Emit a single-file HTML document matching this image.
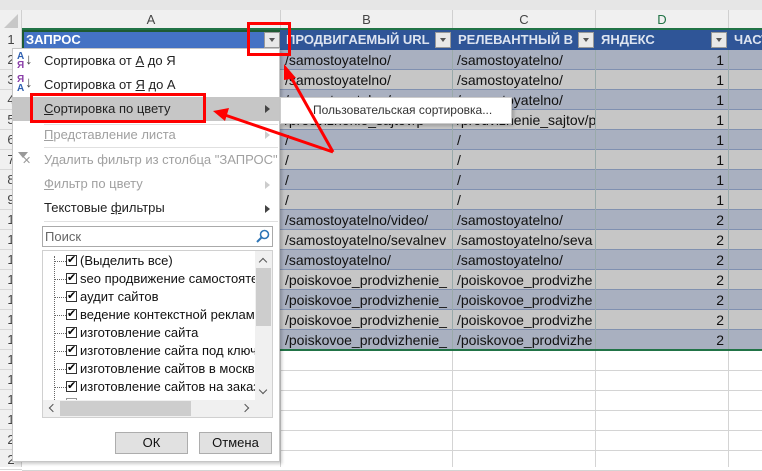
<!DOCTYPE html>
<html><head><meta charset="utf-8"><style>
*{margin:0;padding:0;box-sizing:border-box}
body{width:762px;height:467px;overflow:hidden;background:#fff;font-family:"Liberation Sans","DejaVu Sans",sans-serif;position:relative}
.a{position:absolute}
.cell{position:absolute;height:20px;font-size:14px;line-height:20px;color:#111;white-space:nowrap;overflow:hidden;padding-left:4px}
.mi{position:absolute;left:44px;font-size:13px;color:#222;line-height:20px;white-space:nowrap}
.dis{color:#a0a0a0}
.arr{position:absolute;left:265px;width:0;height:0;border-left:5px solid #444;border-top:4px solid transparent;border-bottom:4px solid transparent}
.li{position:absolute;font-size:13px;color:#111;line-height:18px;white-space:nowrap}
.cb{position:absolute;left:24px;width:11px;height:11px;border:1px solid #333;background:#fff;font-size:11px;line-height:9px;text-align:center;font-weight:bold}
.dot{position:absolute;left:12px;width:12px;border-top:1px dotted #666}
.hd{position:absolute;top:30px;font-size:13px;font-weight:bold;color:#dde4f0;line-height:20px;white-space:nowrap;overflow:hidden}
.chev{position:absolute;width:6px;height:6px;border-left:1.5px solid #555;border-top:1.5px solid #555}
</style></head><body>
<div class="a" style="left:0;top:0;width:762px;height:10px;background:#e6e6e6"></div>
<div class="a" style="left:0;top:10px;width:762px;height:20px;background:#f0f0f0;border-bottom:1px solid #d0d0d0"></div>
<div class="a" style="left:0;top:10px;width:22px;height:457px;background:#f0f0f0;border-right:1px solid #d0d0d0"></div>
<div class="a" style="left:4px;top:14px;width:0;height:0;border-left:14px solid transparent;border-bottom:14px solid #c8c8c8"></div>
<div class="a" style="left:22px;top:10px;width:258px;height:20px;font-size:13px;line-height:20px;text-align:center;color:#444">A</div>
<div class="a" style="left:280px;top:10px;width:172px;height:20px;font-size:13px;line-height:20px;text-align:center;color:#444;border-left:1px solid #d0d0d0">B</div>
<div class="a" style="left:452px;top:10px;width:143px;height:20px;font-size:13px;line-height:20px;text-align:center;color:#444;border-left:1px solid #d0d0d0">C</div>
<div class="a" style="left:595px;top:10px;width:133px;height:20px;font-size:13px;line-height:20px;text-align:center;color:#217346;border-left:1px solid #d0d0d0">D</div>
<div class="a" style="left:728px;top:10px;width:34px;height:20px;border-left:1px solid #d0d0d0"></div>
<div class="a" style="left:22px;top:28px;width:740px;height:2px;background:#217346"></div>

<div class="a" style="left:0;top:30px;width:22px;font-size:13px;color:#444;line-height:20px;text-align:center">1</div>
<div id="rn"></div>

<div class="a" style="left:22px;top:30px;width:258px;height:20px;background:#4472c4;border:2px solid #1e5a32"></div>
<div class="a" style="left:26px;top:30px;font-size:13px;font-weight:bold;color:#fff;line-height:20px">ЗАПРОС</div>
<div class="a" style="left:280px;top:30px;width:482px;height:20px;background:#2f5597"></div>
<div class="hd" style="left:286px;width:146px">ПРОДВИГАЕМЫЙ URL</div>
<div class="hd" style="left:458px;width:118px">РЕЛЕВАНТНЫЙ В Я</div>
<div class="hd" style="left:601px">ЯНДЕКС</div>
<div class="hd" style="left:734px">ЧАСТ</div>
<div class="a" style="left:264px;top:32px;width:16px;height:16px;background:#e8e8e8;border:1px solid #999"></div>
<div class="a" style="left:269px;top:38px;border-top:4px solid #555;border-left:3px solid transparent;border-right:3px solid transparent"></div>
<div class="a" style="left:435px;top:32px;width:16px;height:16px;background:#e8e8e8;border:1px solid #999"></div>
<div class="a" style="left:440px;top:38px;border-top:4px solid #555;border-left:3px solid transparent;border-right:3px solid transparent"></div>
<div class="a" style="left:578px;top:32px;width:16px;height:16px;background:#e8e8e8;border:1px solid #999"></div>
<div class="a" style="left:583px;top:38px;border-top:4px solid #555;border-left:3px solid transparent;border-right:3px solid transparent"></div>
<div class="a" style="left:711px;top:32px;width:16px;height:16px;background:#e8e8e8;border:1px solid #999"></div>
<div class="a" style="left:716px;top:38px;border-top:4px solid #555;border-left:3px solid transparent;border-right:3px solid transparent"></div>

<div id="rows"></div>
<div class="a" style="left:22px;top:349px;width:740px;height:2px;background:#217346"></div>

<script>
var b=["/samostoyatelno/","/samostoyatelno/","/samostoyatelno/","/prodvizhenie_sajtov/p","/","/","/","/","/samostoyatelno/video/","/samostoyatelno/sevalnev","/samostoyatelno/","/poiskovoe_prodvizhenie_","/poiskovoe_prodvizhenie_","/poiskovoe_prodvizhenie_","/poiskovoe_prodvizhenie_"];
var c=["/samostoyatelno/","/samostoyatelno/","/samostoyatelno/","/prodvizhenie_sajtov/p","/","/","/","/","/samostoyatelno/","/samostoyatelno/seva","/samostoyatelno/","/poiskovoe_prodvizhe","/poiskovoe_prodvizhe","/poiskovoe_prodvizhe","/poiskovoe_prodvizhe"];
var d=[1,1,1,1,1,1,1,1,2,2,2,2,2,2,2];
var h="";
for(var i=0;i<15;i++){var y=50+i*20;var bg=i%2==0?"#a9b0c0":"#c6c6c6";
h+='<div class="a" style="left:280px;top:'+y+'px;width:482px;height:20px;background:'+bg+';border-bottom:1px solid #8090b0"></div>';
h+='<div class="a" style="left:22px;top:'+y+'px;width:258px;height:20px;background:'+bg+'"></div>';
h+='<div class="a" style="left:452px;top:'+y+'px;width:1px;height:20px;background:#9aa"></div><div class="a" style="left:595px;top:'+y+'px;width:1px;height:20px;background:#9aa"></div><div class="a" style="left:728px;top:'+y+'px;width:1px;height:20px;background:#9aa"></div>';
h+='<div class="cell" style="left:281px;top:'+y+'px;width:171px">'+b[i]+'</div>';
h+='<div class="cell" style="left:453px;top:'+y+'px;width:142px">'+c[i]+'</div>';
h+='<div class="cell" style="left:596px;top:'+y+'px;width:130px;text-align:right;padding-right:2px">'+d[i]+'</div>';}
for(var j=0;j<6;j++){var y=350+j*20;h+='<div class="a" style="left:22px;top:'+(y+20)+'px;width:740px;height:1px;background:#d4d4d4"></div>';}
h+='<div class="a" style="left:280px;top:350px;width:1px;height:117px;background:#d4d4d4"></div><div class="a" style="left:452px;top:350px;width:1px;height:117px;background:#d4d4d4"></div><div class="a" style="left:595px;top:350px;width:1px;height:117px;background:#d4d4d4"></div><div class="a" style="left:728px;top:350px;width:1px;height:117px;background:#d4d4d4"></div>';
document.getElementById("rows").innerHTML=h;
var r="",nums=[2,3,4,5,6,7,8,9,1,1,1,1,1,1,1,1,1,1,1,2,2,2];
for(var k=0;k<21;k++){var y=50+k*20;r+='<div class="a" style="left:0;top:'+y+'px;width:22px;height:20px;font-size:13px;color:#444;line-height:20px;text-align:center;border-bottom:1px solid #d8d8d8">'+nums[k]+'</div>';}
document.getElementById("rn").innerHTML=r;
</script>

<div class="a" style="left:12px;top:48px;width:268px;height:414px;background:#fff;border:1px solid #c6c6c6;box-shadow:2px 2px 3px rgba(0,0,0,.2)"></div>
<div class="a" style="left:17px;top:52px;font-size:10px;line-height:9px;color:#2e5fb0;font-weight:bold">А<br><span style="color:#8a3fa8">Я</span></div>
<div class="a" style="left:25px;top:51px;font-size:15px;color:#444">↓</div>
<div class="mi" style="top:51px">Сортировка от <u>А</u> до Я</div>
<div class="a" style="left:17px;top:75px;font-size:10px;line-height:9px;color:#8a3fa8;font-weight:bold">Я<br><span style="color:#2e5fb0">А</span></div>
<div class="a" style="left:25px;top:74px;font-size:15px;color:#444">↓</div>
<div class="mi" style="top:75px">Сортировка от <u>Я</u> до А</div>
<div class="a" style="left:13px;top:97px;width:266px;height:24px;background:#c6c6c6"></div>
<div class="mi" style="top:99px"><u>С</u>ортировка по цвету</div>
<div class="arr" style="top:105px"></div>
<div class="a" style="left:44px;top:124px;width:234px;height:1px;background:#e0e0e0"></div>
<div class="mi dis" style="top:125px"><u>П</u>редставление листа</div>
<div class="arr" style="top:131px;border-left-color:#ccc"></div>
<div class="a" style="left:44px;top:147px;width:234px;height:1px;background:#e0e0e0"></div>
<div class="a" style="left:18px;top:152px;border-top:6px solid #999;border-left:5px solid transparent;border-right:5px solid transparent"></div>
<div class="a" style="left:22px;top:154px;font-size:11px;color:#999">✕</div>
<div class="mi dis" style="top:150px;font-size:13px">Удалить фильтр из столбца "ЗАПРОС"</div>
<div class="mi dis" style="top:174px"><u>Ф</u>ильтр по цвету</div>
<div class="arr" style="top:181px;border-left-color:#ccc"></div>
<div class="mi" style="top:198px">Текстовые <u>ф</u>ильтры</div>
<div class="arr" style="top:205px"></div>
<div class="a" style="left:44px;top:221px;width:234px;height:1px;background:#e0e0e0"></div>
<div class="a" style="left:42px;top:226px;width:231px;height:21px;border:1px solid #aaa;background:#fff"></div>
<div class="a" style="left:45px;top:227px;font-size:13px;color:#666;line-height:19px">Поиск</div>
<svg class="a" style="left:256px;top:229px" width="14" height="14"><circle cx="8.5" cy="5.5" r="4" fill="none" stroke="#2e75b6" stroke-width="1.6"/><line x1="5.5" y1="8.5" x2="1" y2="13" stroke="#2e75b6" stroke-width="2"/></svg>
<div class="a" style="left:42px;top:250px;width:231px;height:168px;border:1px solid #d0d0d0;background:#fff"></div>
<div class="a" style="left:54px;top:256px;height:146px;border-left:1px dotted #666"></div>
<div class="a" id="lst" style="left:42px;top:251px;width:213px;height:149px;overflow:hidden"></div>
<script>
var it=["(Выделить все)","seo продвижение самостоятель","аудит сайтов","ведение контекстной рекламы","изготовление сайта","изготовление сайта под ключ","изготовление сайтов в москве","изготовление сайтов на заказ"];
var s="";for(var i=0;i<it.length;i++){var y=1+i*18;s+='<div class="dot" style="top:'+(y+9)+'px"></div><div class="cb" style="top:'+(y+3)+'px">✔</div><div class="li" style="left:38px;top:'+y+'px">'+it[i]+'</div>';}
s+='<div class="cb" style="top:147px;border-color:#999"></div>';
document.getElementById("lst").innerHTML=s;
</script>
<div class="a" style="left:255px;top:251px;width:17px;height:149px;background:#f0f0f0"></div>
<div class="a" style="left:256px;top:268px;width:15px;height:58px;background:#cdcdcd"></div>
<div class="chev" style="left:260px;top:259px;transform:rotate(45deg)"></div>
<div class="chev" style="left:260px;top:387px;transform:rotate(225deg)"></div>
<div class="a" style="left:43px;top:400px;width:229px;height:17px;background:#f0f0f0"></div>
<div class="a" style="left:60px;top:401px;width:131px;height:15px;background:#cdcdcd"></div>
<div class="chev" style="left:50px;top:405px;transform:rotate(-45deg)"></div>
<div class="chev" style="left:242px;top:405px;transform:rotate(135deg)"></div>
<div class="a" style="left:115px;top:432px;width:73px;height:22px;background:#e1e1e1;border:1px solid #adadad;font-size:13px;text-align:center;line-height:20px;color:#111">ОК</div>
<div class="a" style="left:199px;top:432px;width:73px;height:22px;background:#e1e1e1;border:1px solid #adadad;font-size:13px;text-align:center;line-height:20px;color:#111">Отмена</div>

<div class="a" style="left:280px;top:97px;width:232px;height:27px;background:#fff;border:1px solid #ccc;box-shadow:2px 2px 3px rgba(0,0,0,.2)"></div>
<div class="a" style="left:313px;top:101px;font-size:12px;color:#333;line-height:18px;white-space:nowrap">Пользовательская сортировка...</div>

<div class="a" style="left:247px;top:22px;width:44px;height:34px;border:3px solid #f00"></div>
<div class="a" style="left:30px;top:93px;width:176px;height:30px;border:3px solid #f00"></div>
<svg class="a" style="left:0;top:0" width="762" height="467">
<line x1="333" y1="152" x2="287" y2="70" stroke="#f00" stroke-width="3"/>
<polygon points="284,64 296,78 284,80" fill="#f00"/>
<line x1="333" y1="152" x2="222" y2="114" stroke="#f00" stroke-width="3"/>
<polygon points="213,111 229,108 225,121" fill="#f00"/>
</svg>
</body></html>
